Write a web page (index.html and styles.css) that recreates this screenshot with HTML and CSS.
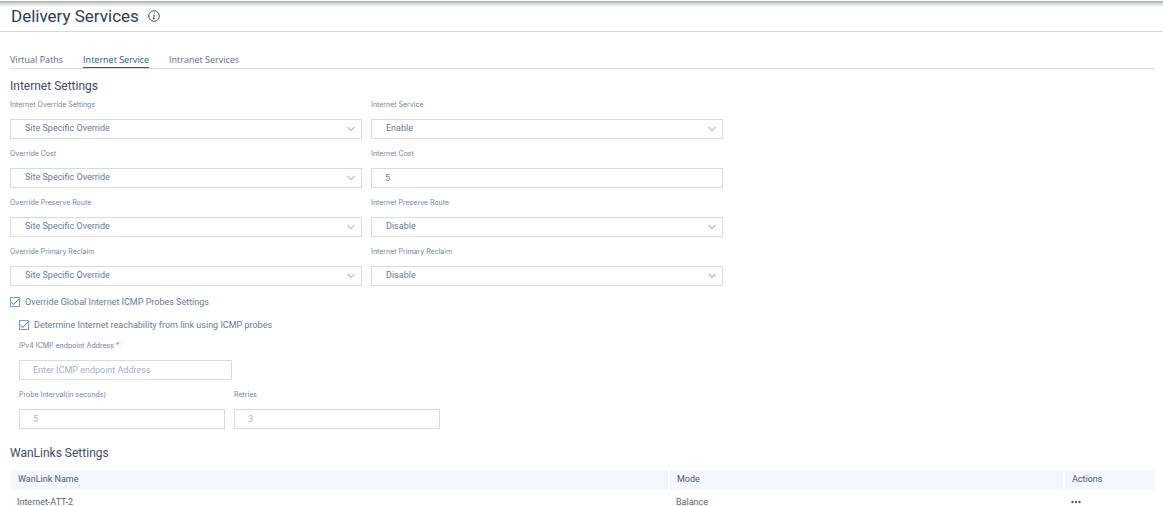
FILE: index.html
```html
<!DOCTYPE html>
<html lang="en">
<head>
<meta charset="utf-8">
<meta name="viewport" content="width=device-width, initial-scale=1">
<title>Delivery Services</title>
<link rel="stylesheet" href="styles.css">
</head>
<body>
<header class="page-header">
  <h1 class="page-title">Delivery Services</h1>
  <svg class="info-icon" viewBox="0 0 12 12" role="img" aria-label="Information"><circle cx="6" cy="6" r="5.3"/><path d="M5 5h1.2L5.8 8.6M4.6 8.7h2.6M6 3h.9"/></svg>
</header>
<main class="content">
  <nav class="tabs">
    <a class="tab" href="#virtual">Virtual Paths</a>
    <a class="tab tab-active" href="#internet" aria-current="page">Internet Service</a>
    <a class="tab" href="#intranet">Intranet Services</a>
  </nav>
  <h2 class="section-title">Internet Settings</h2>
  <form>
    <div class="field-grid">
      <div class="field"><label for="override-settings">Internet Override Settings</label><div class="select-box"><select id="override-settings"><option>Site Specific Override</option></select><svg class="chevron" viewBox="0 0 10 6"><path d="M1.5 1 5 4.5 8.5 1"/></svg></div></div>
      <div class="field"><label for="service">Internet Service</label><div class="select-box"><select id="service"><option>Enable</option></select><svg class="chevron" viewBox="0 0 10 6"><path d="M1.5 1 5 4.5 8.5 1"/></svg></div></div>
      <div class="field"><label for="override-cost">Override Cost</label><div class="select-box"><select id="override-cost"><option>Site Specific Override</option></select><svg class="chevron" viewBox="0 0 10 6"><path d="M1.5 1 5 4.5 8.5 1"/></svg></div></div>
      <div class="field"><label for="cost">Internet Cost</label><input class="text-input" id="cost" type="text" value="5"></div>
      <div class="field"><label for="override-route">Override Preserve Route</label><div class="select-box"><select id="override-route"><option>Site Specific Override</option></select><svg class="chevron" viewBox="0 0 10 6"><path d="M1.5 1 5 4.5 8.5 1"/></svg></div></div>
      <div class="field"><label for="route">Internet Preserve Route</label><div class="select-box"><select id="route"><option>Disable</option></select><svg class="chevron" viewBox="0 0 10 6"><path d="M1.5 1 5 4.5 8.5 1"/></svg></div></div>
      <div class="field"><label for="override-reclaim">Override Primary Reclaim</label><div class="select-box"><select id="override-reclaim"><option>Site Specific Override</option></select><svg class="chevron" viewBox="0 0 10 6"><path d="M1.5 1 5 4.5 8.5 1"/></svg></div></div>
      <div class="field"><label for="reclaim">Internet Primary Reclaim</label><div class="select-box"><select id="reclaim"><option>Disable</option></select><svg class="chevron" viewBox="0 0 10 6"><path d="M1.5 1 5 4.5 8.5 1"/></svg></div></div>
    </div>
    <div class="check-row">
      <span class="check"><input id="override-icmp" type="checkbox" checked><svg viewBox="0 0 10 10"><path d="M1.5 5.3 3.8 7.5 8.7 2"/></svg></span>
      <label for="override-icmp">Override Global Internet ICMP Probes Settings</label>
    </div>
    <div class="probe-settings">
      <div class="check-row">
        <span class="check"><input id="reachability" type="checkbox" checked><svg viewBox="0 0 10 10"><path d="M1.5 5.3 3.8 7.5 8.7 2"/></svg></span>
        <label for="reachability">Determine Internet reachability from link using ICMP probes</label>
      </div>
      <div class="field endpoint"><label for="endpoint">IPv4 ICMP endpoint Address<span class="required">*</span></label><input class="text-input" id="endpoint" type="text" placeholder="Enter ICMP endpoint Address"></div>
      <div class="probe-grid">
        <div class="field"><label for="interval">Probe Interval(in seconds)</label><input class="text-input" id="interval" type="text" placeholder="5"></div>
        <div class="field"><label for="retries">Retries</label><input class="text-input" id="retries" type="text" placeholder="3"></div>
      </div>
    </div>
  </form>
  <h2 class="section-title links-title">WanLinks Settings</h2>
  <table class="links-table">
    <colgroup><col><col class="mode-col"><col class="actions-col"></colgroup>
    <thead><tr><th scope="col">WanLink Name</th><th scope="col">Mode</th><th scope="col">Actions</th></tr></thead>
    <tbody><tr><td>Internet-ATT-2</td><td>Balance</td><td><button class="more" type="button" aria-label="More actions"><svg viewBox="0 0 10 4"><circle cx="1.5" cy="2" r="1.2"/><circle cx="5" cy="2" r="1.2"/><circle cx="8.5" cy="2" r="1.2"/></svg></button></td></tr></tbody>
  </table>
</main>
</body>
</html>
```
FILE: styles.css
```css
* { box-sizing: border-box; }
html { scrollbar-width: none; }
body {
  margin: 0;
  background: #fff;
  color: #586377;
  font-family: Roboto, "Liberation Sans", sans-serif;
  font-size: 9px;
  line-height: 12px;
}
.page-header {
  display: flex;
  align-items: center;
  gap: 9px;
  height: 32px;
  padding: 0 11px;
  border-bottom: 1px solid #d7dadd;
  background: linear-gradient(#fff 1px, #b2b6b4 1px, #b2b6b4 2px, #d0d3d1 3px, #fff 7px);
}
.page-title {
  margin: 0;
  color: #303c50;
  font-size: 17px;
  font-weight: 400;
  line-height: 20px;
}
.info-icon { width: 12px; height: 12px; fill: none; stroke: #4e5663; stroke-width: 1; }
.content { padding: 21px 8px 0 10px; }
.tabs { display: flex; gap: 20px; border-bottom: 1px solid #d5dae1; font-family: "Open Sans", Roboto, sans-serif; }
.tab {
  padding: 1px 0 1px;
  border-bottom: 1px solid transparent;
  color: #5f6b80;
  text-decoration: none;
}
.tab-active { border-color: #17616b; color: #17616b; }
.section-title {
  margin: 9px 0 5px;
  color: #424b5c;
  font-size: 12px;
  font-weight: 400;
  line-height: 16px;
}
.field-grid { display: grid; grid-template-columns: 1fr 1fr; gap: 9px; max-width: 713px; }
.field { display: flex; flex-direction: column; gap: 8px; }
.field label { color: #76839a; font-family: Inter, Roboto, sans-serif; font-size: 7px; }
.required { margin-left: 2px; color: #f0574b; }
.select-box { display: grid; align-items: center; }
.select-box select, .chevron { grid-area: 1 / 1; }
.select-box select, .text-input {
  width: 100%;
  height: 20px;
  margin: 0;
  border: 1px solid #d7dadf;
  border-radius: 0;
  background: #fff;
  color: #6b7a91;
  font: inherit;
}
.select-box select { appearance: none; padding: 0 20px 2px 14px; }
.text-input { padding: 0 13px; }
.text-input::placeholder { color: #a7b1c1; opacity: 1; }
.chevron {
  justify-self: end;
  width: 10px;
  height: 6px;
  margin: 0 6px 0 0;
  fill: none;
  stroke: #bdc5d1;
  stroke-width: 1.5;
  pointer-events: none;
}
.check-row { display: flex; align-items: center; gap: 5px; margin-top: 10px; color: #6b7a91; }
.check { display: grid; }
.check input, .check svg { grid-area: 1 / 1; width: 10px; height: 10px; margin: 0; }
.check input { appearance: none; border: 1px solid #8f9bad; background: #fff; }
.check svg { fill: none; stroke: #1596a8; stroke-width: 1; pointer-events: none; }
.probe-settings { padding-left: 9px; }
.probe-settings .check-row { margin-top: 11px; }
.endpoint { max-width: 213px; margin: 9px 0; }
.probe-grid { display: grid; grid-template-columns: 1fr 1fr; gap: 9px; max-width: 421px; }
.links-title { margin: 16px 0 9px; }
.links-table { width: calc(100% + 3px); border-collapse: separate; border-spacing: 2px 0; table-layout: fixed; margin-left: -1px; }
.mode-col { width: 393px; }
.actions-col { width: 90px; }
.links-table th { padding: 3px 7px 5px; background: #f3f6fb; color: #4e596c; font-weight: 400; text-align: left; }
.links-table td { padding: 6px 6px 0; color: #586377; }
.more { display: block; height: 12px; padding: 0; border: 0; background: none; }
.more svg { display: block; width: 10px; height: 4px; fill: #4e5663; }
```
